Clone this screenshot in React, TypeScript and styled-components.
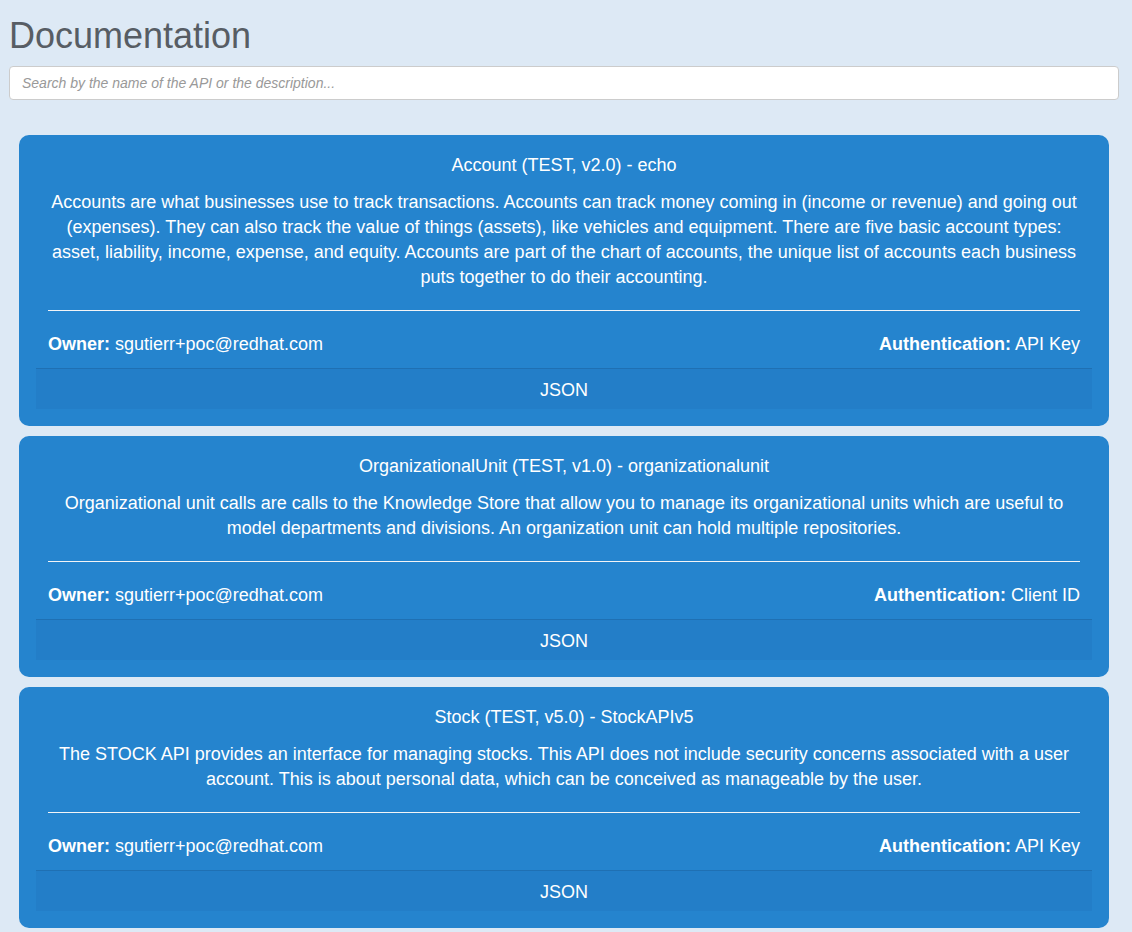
import React from "react";
import styled, { createGlobalStyle } from "styled-components";

const GlobalStyle = createGlobalStyle`
  html, body {
    margin: 0;
    padding: 0;
    background: #dde9f5;
    font-family: "Liberation Sans", Arial, sans-serif;
  }
  * { box-sizing: border-box; }
`;

const Page = styled.div`
  padding: 0 13px 40px 9px;
`;

const Heading = styled.h1`
  margin: 16px 0 10px;
  font-size: 36px;
  line-height: 1.1;
  font-weight: 400;
  color: #575d64;
`;

const Search = styled.input`
  display: block;
  width: 100%;
  height: 34px;
  padding: 6px 12px;
  border: 1px solid #cccccc;
  border-radius: 4px;
  background: #ffffff;
  font-family: "Liberation Sans", Arial, sans-serif;
  font-size: 14px;
  color: #555;
  outline: none;
  &::placeholder {
    color: #999999;
    font-style: italic;
  }
`;

const List = styled.div`
  display: flex;
  flex-direction: column;
  gap: 10px;
  margin: 35px 10px 0;
`;

const Card = styled.div`
  background: #2584ce;
  border-radius: 10px;
  padding: 18px 17px 17px;
  color: #ffffff;
  font-size: 18px;
  line-height: 25px;
`;

const Body = styled.div`
  padding: 0 12px;
`;

const Title = styled.div`
  text-align: center;
  margin-bottom: 12px;
`;

const Description = styled.p`
  margin: 0;
  text-align: center;
`;

const Rule = styled.hr`
  margin: 20px 0 21px;
  border: 0;
  border-top: 1px solid #f2f4f7;
`;

const Meta = styled.div`
  display: flex;
  justify-content: space-between;
  margin-bottom: 11px;
`;

const Label = styled.strong`
  font-weight: 700;
`;

const Footer = styled.a`
  display: block;
  height: 41px;
  padding-top: 2px;
  line-height: 38px;
  border-top: 1px solid #1f70b3;
  background: #237ec8;
  text-align: center;
  color: #ffffff;
  text-decoration: none;
  cursor: pointer;
`;

type Api = {
  title: string;
  description: string;
  owner: string;
  auth: string;
};

const apis: Api[] = [
  {
    title: "Account (TEST, v2.0) - echo",
    description:
      "Accounts are what businesses use to track transactions. Accounts can track money coming in (income or revenue) and going out (expenses). They can also track the value of things (assets), like vehicles and equipment. There are five basic account types: asset, liability, income, expense, and equity. Accounts are part of the chart of accounts, the unique list of accounts each business puts together to do their accounting.",
    owner: "sgutierr+poc@redhat.com",
    auth: "API Key",
  },
  {
    title: "OrganizationalUnit (TEST, v1.0) - organizationalunit",
    description:
      "Organizational unit calls are calls to the Knowledge Store that allow you to manage its organizational units which are useful to model departments and divisions. An organization unit can hold multiple repositories.",
    owner: "sgutierr+poc@redhat.com",
    auth: "Client ID",
  },
  {
    title: "Stock (TEST, v5.0) - StockAPIv5",
    description:
      "The STOCK API provides an interface for managing stocks. This API does not include security concerns associated with a user account. This is about personal data, which can be conceived as manageable by the user.",
    owner: "sgutierr+poc@redhat.com",
    auth: "API Key",
  },
];

export default function App() {
  return (
    <>
      <GlobalStyle />
      <Page>
        <Heading>Documentation</Heading>
        <Search placeholder="Search by the name of the API or the description..." />
        <List>
          {apis.map((api) => (
            <Card key={api.title}>
              <Body>
                <Title>{api.title}</Title>
                <Description>{api.description}</Description>
                <Rule />
                <Meta>
                  <span>
                    <Label>Owner:</Label> {api.owner}
                  </span>
                  <span>
                    <Label>Authentication:</Label> {api.auth}
                  </span>
                </Meta>
              </Body>
              <Footer>JSON</Footer>
            </Card>
          ))}
        </List>
      </Page>
    </>
  );
}
